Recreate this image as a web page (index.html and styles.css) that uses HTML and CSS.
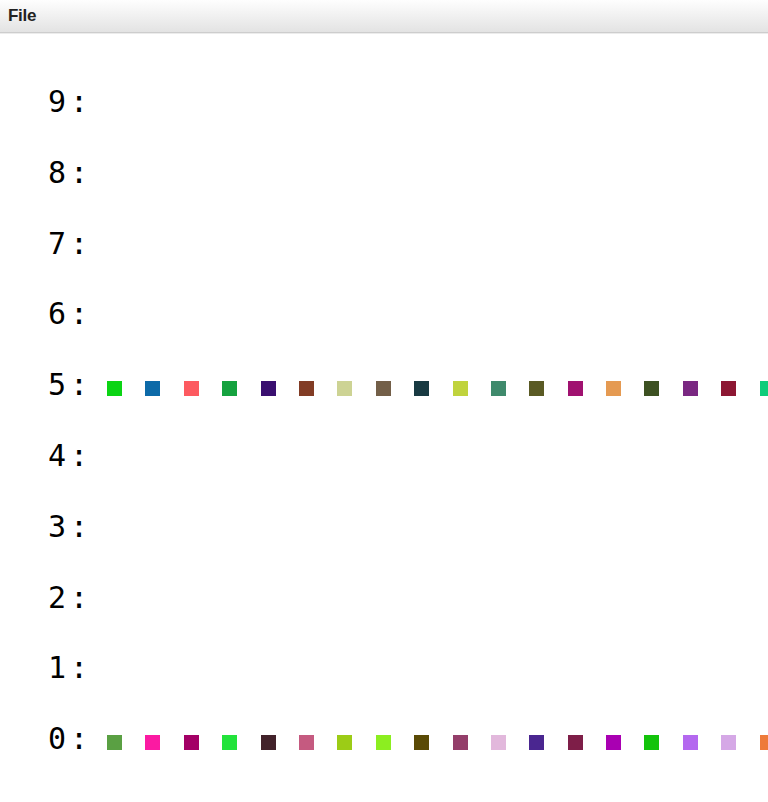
FILE: index.html
```html
<!DOCTYPE html>
<html>
<head>
<meta charset="utf-8">
<link rel="stylesheet" href="styles.css">
</head>
<body>
<div class="menubar"><span class="menu">File</span></div>
<div class="chart">
  <div class="row"><span class="label">9:</span></div>
  <div class="row"><span class="label">8:</span></div>
  <div class="row"><span class="label">7:</span></div>
  <div class="row"><span class="label">6:</span></div>
  <div class="row"><span class="label">5:</span><span class="sq c5-1"></span><span class="sq c5-2"></span><span class="sq c5-3"></span><span class="sq c5-4"></span><span class="sq c5-5"></span><span class="sq c5-6"></span><span class="sq c5-7"></span><span class="sq c5-8"></span><span class="sq c5-9"></span><span class="sq c5-10"></span><span class="sq c5-11"></span><span class="sq c5-12"></span><span class="sq c5-13"></span><span class="sq c5-14"></span><span class="sq c5-15"></span><span class="sq c5-16"></span><span class="sq c5-17"></span><span class="sq c5-18"></span></div>
  <div class="row"><span class="label">4:</span></div>
  <div class="row"><span class="label">3:</span></div>
  <div class="row"><span class="label">2:</span></div>
  <div class="row"><span class="label">1:</span></div>
  <div class="row"><span class="label">0:</span><span class="sq c0-1"></span><span class="sq c0-2"></span><span class="sq c0-3"></span><span class="sq c0-4"></span><span class="sq c0-5"></span><span class="sq c0-6"></span><span class="sq c0-7"></span><span class="sq c0-8"></span><span class="sq c0-9"></span><span class="sq c0-10"></span><span class="sq c0-11"></span><span class="sq c0-12"></span><span class="sq c0-13"></span><span class="sq c0-14"></span><span class="sq c0-15"></span><span class="sq c0-16"></span><span class="sq c0-17"></span><span class="sq c0-18"></span></div>
</div>
</body>
</html>
```
FILE: styles.css
```css
html, body {
  margin: 0;
  padding: 0;
  background: #ffffff;
  overflow: hidden;
}
.menubar {
  height: 32px;
  background: linear-gradient(#fefefe, #e3e3e3);
  border-bottom: 1px solid #cdcdcd;
  box-shadow: 0 1px 0 #ececec;
  padding-left: 8px;
  font-family: "Liberation Sans", Arial, sans-serif;
  font-weight: bold;
  font-size: 17px;
  letter-spacing: -0.3px;
  line-height: 32px;
  color: #222222;
}
.chart {
  padding-top: 34px;
  padding-left: 48px;
  font-family: "DejaVu Sans Mono", monospace;
  font-size: 30px;
  color: #000000;
}
.row {
  height: 70.8px;
  line-height: 70.8px;
  white-space: nowrap;
  overflow: hidden;
}
.label {
  display: inline-block;
  width: 59px;
  letter-spacing: 4px;
}
.sq {
  display: inline-block;
  width: 15px;
  height: 15px;
  margin-right: 23.4px;
  vertical-align: -1px;
}
.c5-1 { background: #0bd414; }
.c5-2 { background: #0d6aa8; }
.c5-3 { background: #fd5a60; }
.c5-4 { background: #15a23f; }
.c5-5 { background: #3a0f70; }
.c5-6 { background: #823c25; }
.c5-7 { background: #cdd394; }
.c5-8 { background: #735f48; }
.c5-9 { background: #183a42; }
.c5-10 { background: #c0d33d; }
.c5-11 { background: #3f8a6c; }
.c5-12 { background: #5a5a24; }
.c5-13 { background: #a01170; }
.c5-14 { background: #e59a52; }
.c5-15 { background: #3d5122; }
.c5-16 { background: #7a2882; }
.c5-17 { background: #8d1733; }
.c5-18 { background: #0ecc7a; }
.c0-1 { background: #5aa043; }
.c0-2 { background: #fb1aa2; }
.c0-3 { background: #a30066; }
.c0-4 { background: #22e33b; }
.c0-5 { background: #42222a; }
.c0-6 { background: #c55a80; }
.c0-7 { background: #9ccc16; }
.c0-8 { background: #8cee20; }
.c0-9 { background: #5a4a05; }
.c0-10 { background: #943e6a; }
.c0-11 { background: #e2b8dc; }
.c0-12 { background: #4a2690; }
.c0-13 { background: #7e1e48; }
.c0-14 { background: #a900b2; }
.c0-15 { background: #13c30b; }
.c0-16 { background: #b468ef; }
.c0-17 { background: #d5a8e6; }
.c0-18 { background: #ee7a3a; }
```
